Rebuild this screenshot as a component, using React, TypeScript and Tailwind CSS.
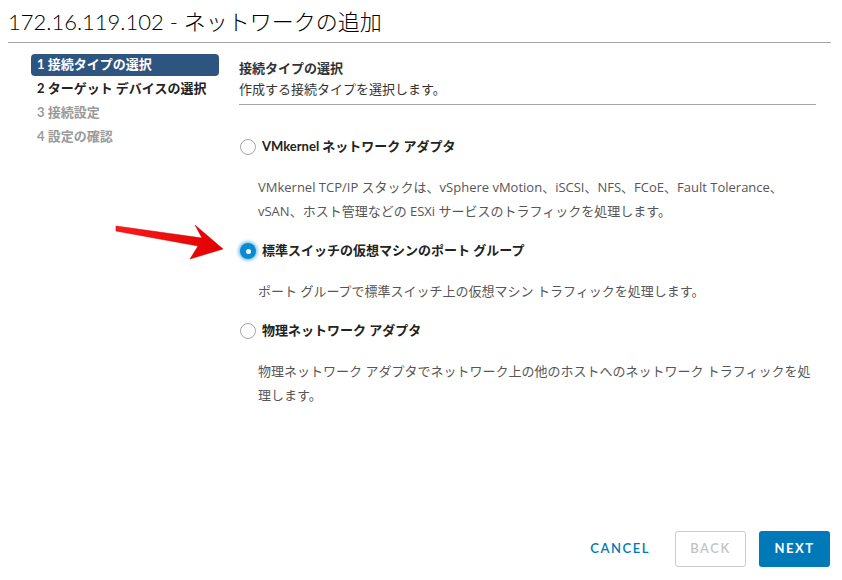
import React from 'react';

const FONT = "font-['Lato','Noto_Sans_CJK_JP',sans-serif]";

const STEPS = [
  { label: '1 接続タイプの選択', state: 'active' },
  { label: '2 ターゲット デバイスの選択', state: 'enabled' },
  { label: '3 接続設定', state: 'disabled' },
  { label: '4 設定の確認', state: 'disabled' },
];

const OPTIONS = [
  {
    id: 'vmk',
    label: 'VMkernel ネットワーク アダプタ',
    desc: 'VMkernel TCP/IP スタックは、vSphere vMotion、iSCSI、NFS、FCoE、Fault Tolerance、vSAN、ホスト管理などの ESXi サービスのトラフィックを処理します。',
  },
  {
    id: 'pg',
    label: '標準スイッチの仮想マシンのポート グループ',
    desc: 'ポート グループで標準スイッチ上の仮想マシン トラフィックを処理します。',
  },
  {
    id: 'pnic',
    label: '物理ネットワーク アダプタ',
    desc: '物理ネットワーク アダプタでネットワーク上の他のホストへのネットワーク トラフィックを処理します。',
  },
];

function Radio({ checked }: { checked: boolean }) {
  if (checked) {
    return (
      <span className="flex h-4 w-4 shrink-0 items-center justify-center rounded-full bg-[#0a8bd0] shadow-[0_0_3px_2px_rgba(0,140,210,0.45)]">
        <span className="h-[5px] w-[5px] rounded-full bg-white" />
      </span>
    );
  }
  return <span className="h-4 w-4 shrink-0 rounded-full border border-[#a8a8a8] bg-white" />;
}

export default function App() {
  const selected = 'pg';

  return (
    <div className={`relative flex h-[580px] w-[842px] flex-col overflow-hidden bg-white ${FONT}`}>
      <div className="mx-2 mr-[11px] border-b border-[#a6a6a6] pt-[6px] pb-[5px]">
        <h1 className="text-[22px] font-light leading-[31px] text-[#000]">172.16.119.102 - ネットワークの追加</h1>
      </div>

      <div className="flex flex-1 pt-[10px]">
        <nav className="ml-[31px] w-[188px] shrink-0">
          {STEPS.map((s) => (
            <div key={s.label} className="flex h-6 items-center">
              <div
                className={
                  s.state === 'active'
                    ? 'flex h-[22px] w-full items-center rounded-[4px] bg-[#2d5580] px-[6px] text-[13px] font-bold text-white'
                    : s.state === 'enabled'
                    ? 'px-[6px] text-[13px] font-bold text-[#222]'
                    : 'px-[6px] text-[13px] font-bold text-[#9a9a9a]'
                }
              >
                {s.label}
              </div>
            </div>
          ))}
        </nav>

        <section className="ml-5 w-[577px] pt-[5px]">
          <div className="border-b border-[#a6a6a6] pb-[4px]">
            <div className="text-[13px] font-bold leading-[21px] text-[#333]">接続タイプの選択</div>
            <div className="text-[13px] leading-[21px] text-[#333]">作成する接続タイプを選択します。</div>
          </div>

          <div className="flex flex-col gap-4 pt-[30px]">
            {OPTIONS.map((o) => (
              <div key={o.id} className="flex flex-col gap-4">
                <label className="flex h-6 items-center gap-[6px] pl-[1px]">
                  <Radio checked={o.id === selected} />
                  <span className="text-[13px] font-bold text-[#222]">{o.label}</span>
                </label>
                <p className="pl-[19px] font-['Open_Sans','Noto_Sans_CJK_JP',sans-serif] text-[13px] leading-6 text-[#565656]">
                  {o.desc}
                </p>
              </div>
            ))}
          </div>
        </section>
      </div>

      <footer className="flex items-center justify-end gap-[13px] pr-3 pb-[13px]">
        <button className="h-9 px-3 text-[13px] font-semibold tracking-[0.12em] text-[#0079b8]">CANCEL</button>
        <button className="h-9 w-[71px] rounded-[3px] border border-[#cccccc] text-[13px] font-semibold tracking-[0.12em] text-[#c4c4c4]">
          BACK
        </button>
        <button className="h-9 w-[71px] rounded-[3px] bg-[#0079b8] text-[13px] font-bold tracking-[0.12em] text-white">NEXT</button>
      </footer>

      <svg className="pointer-events-none absolute left-0 top-0" width="842" height="580" viewBox="0 0 842 580">
        <defs>
          <linearGradient id="arr" x1="0" y1="0" x2="1" y2="0">
            <stop offset="0" stopColor="#ff1a1a" />
            <stop offset="1" stopColor="#e00000" />
          </linearGradient>
        </defs>
        <path
          d="M116 226 L202 238 L195 225 L223 249 L190 259 L198 246 L116 231 Z"
          fill="url(#arr)"
          stroke="#c00000"
          strokeWidth="0.5"
          strokeLinejoin="round"
        />
      </svg>
    </div>
  );
}
